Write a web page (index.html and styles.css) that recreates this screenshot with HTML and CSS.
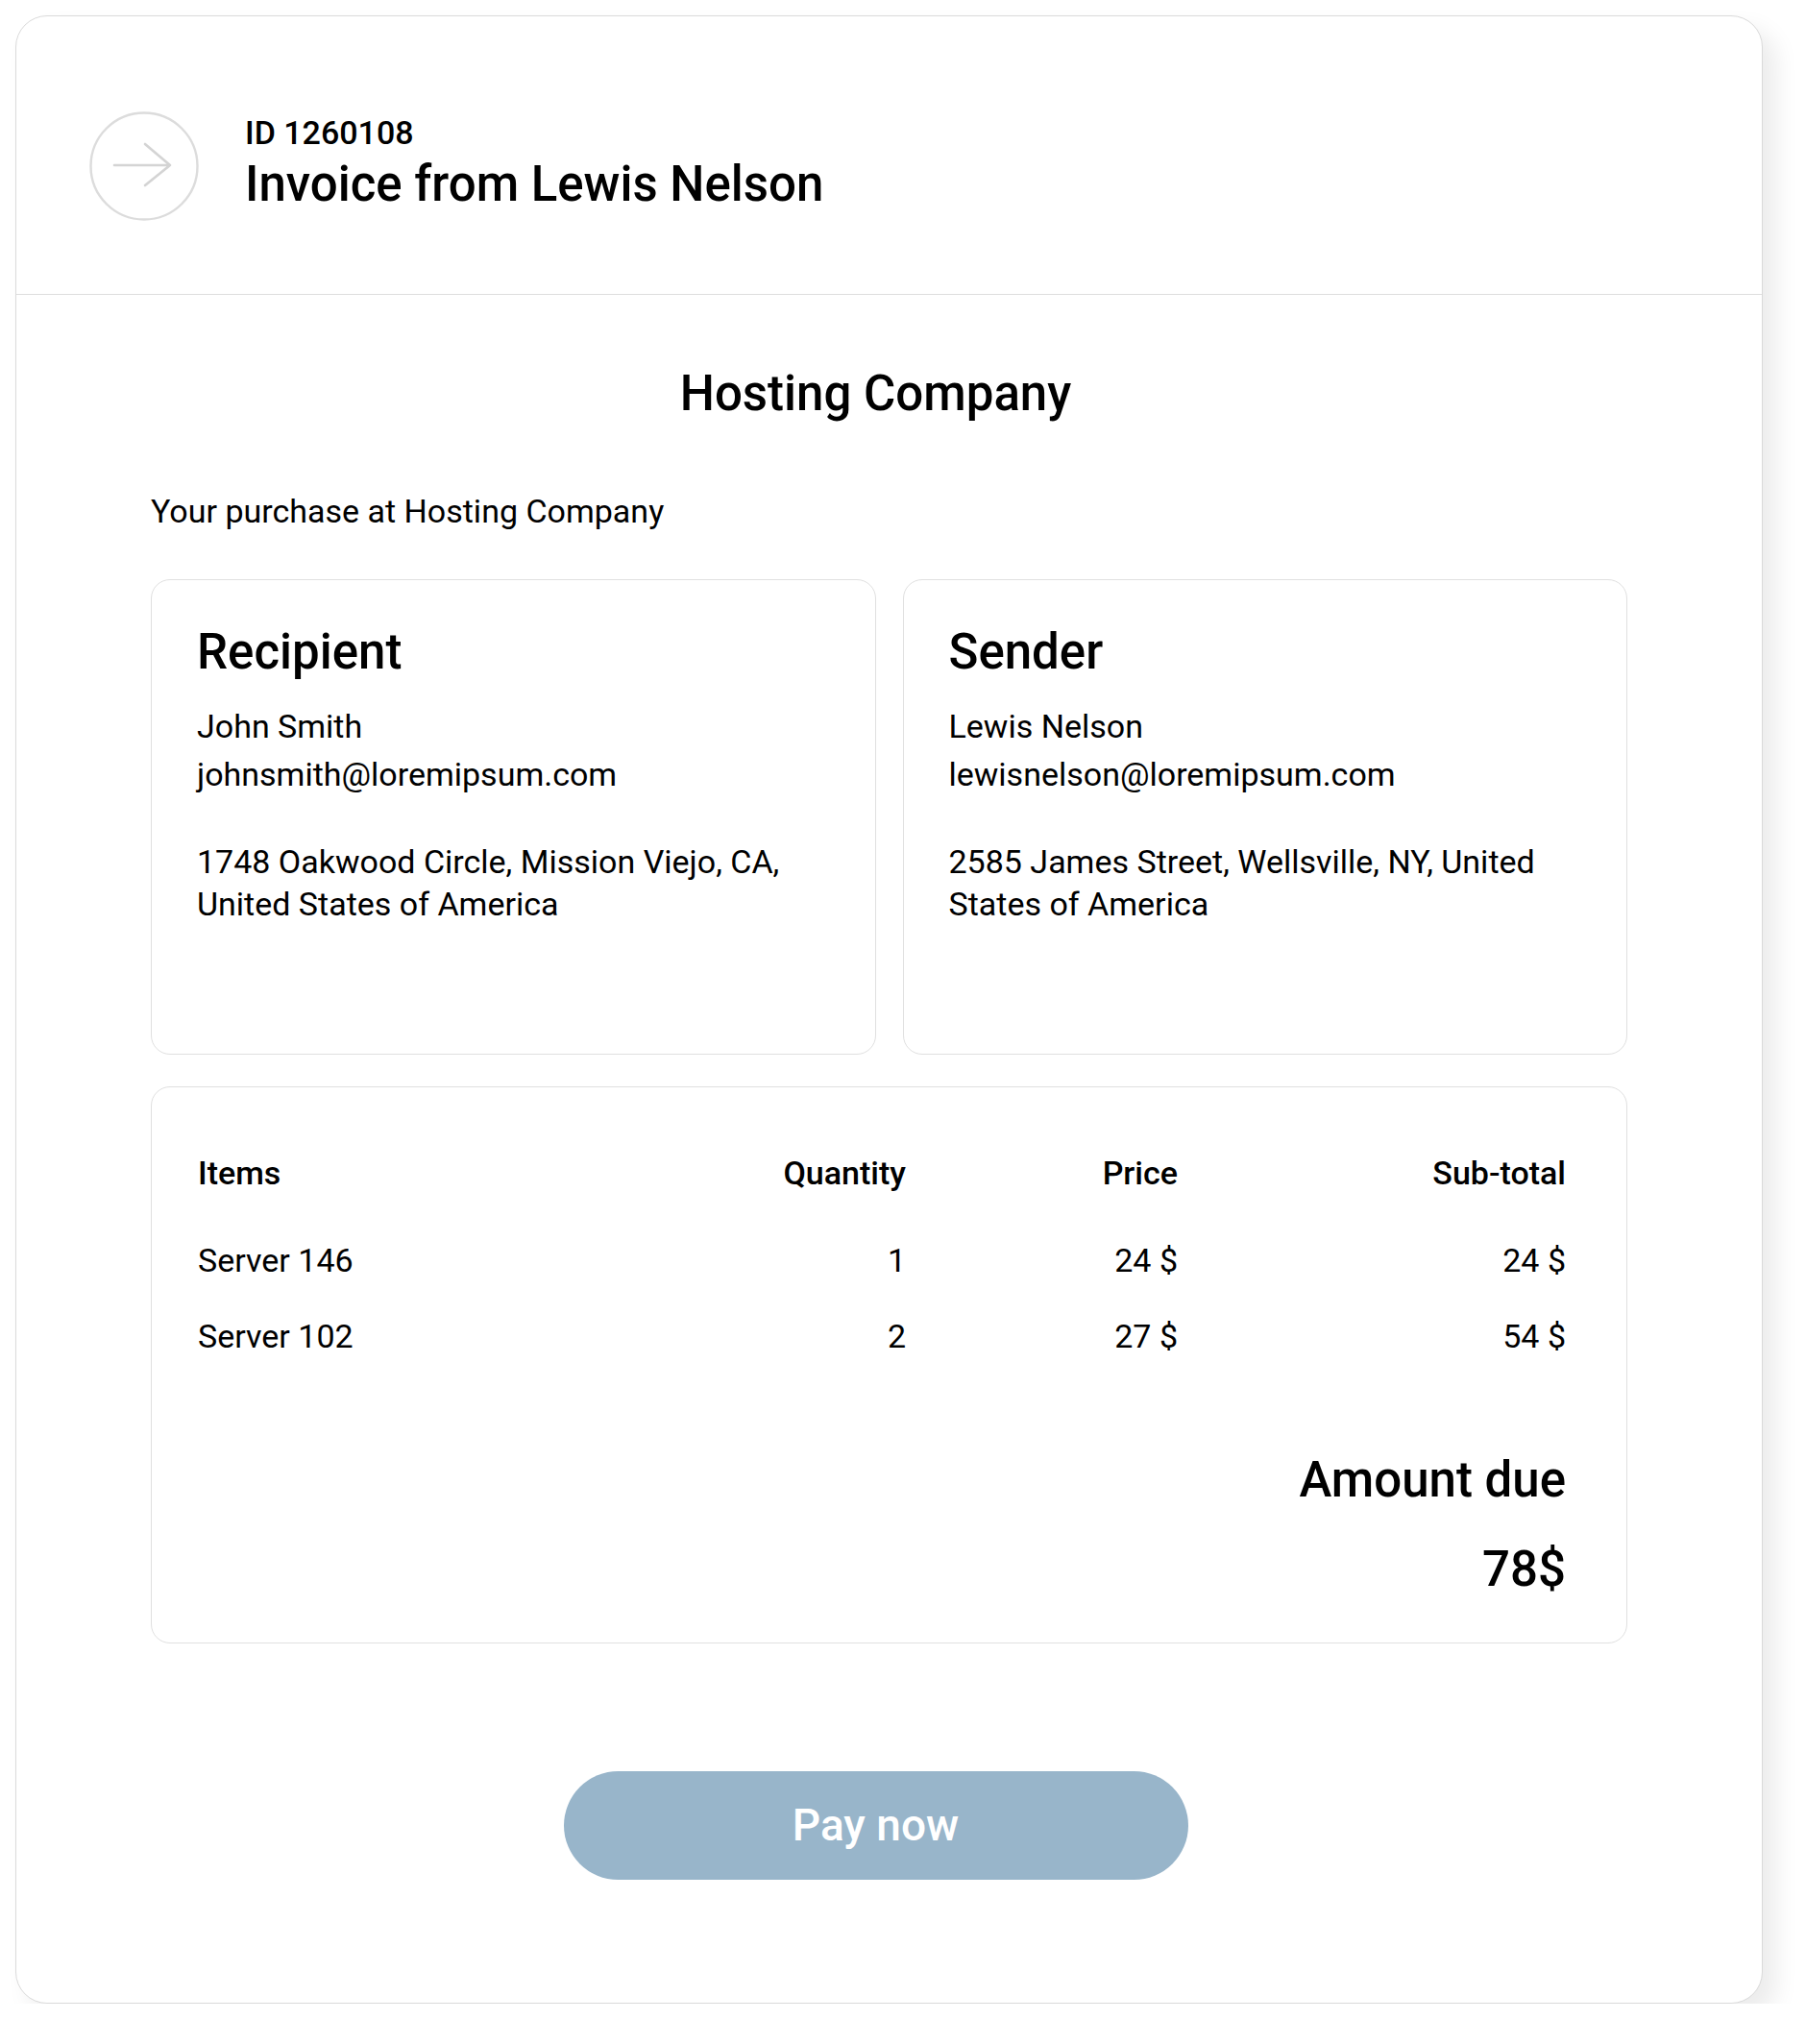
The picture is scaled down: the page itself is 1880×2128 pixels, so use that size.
FILE: index.html
```html
<!DOCTYPE html>
<html lang="en">
<head>
<meta charset="utf-8">
<title>Invoice from Lewis Nelson</title>
<link rel="stylesheet" href="styles.css">
</head>
<body>
<main class="invoice">
  <header class="invoice-header">
    <div class="back-icon">
      <svg width="114" height="114" viewBox="0 0 114 114" aria-hidden="true">
        <circle cx="57" cy="57" r="55.5" fill="none" stroke="#dcdcdc" stroke-width="2.4"/>
        <path d="M26 56 H84 M58 34 L84 56 L58 77" fill="none" stroke="#d4d4d4" stroke-width="2.6" stroke-linecap="round" stroke-linejoin="round"/>
      </svg>
    </div>
    <div class="header-text">
      <div class="invoice-id">ID 1260108</div>
      <h1 class="invoice-title">Invoice from Lewis Nelson</h1>
    </div>
  </header>

  <section class="invoice-body">
    <h2 class="company">Hosting Company</h2>
    <p class="purchase">Your purchase at Hosting Company</p>

    <div class="parties">
      <div class="party">
        <h3 class="party-title">Recipient</h3>
        <div class="party-line">John Smith</div>
        <div class="party-line">johnsmith@loremipsum.com</div>
        <div class="party-address">1748 Oakwood Circle, Mission Viejo, CA,<br>United States of America</div>
      </div>
      <div class="party">
        <h3 class="party-title">Sender</h3>
        <div class="party-line">Lewis Nelson</div>
        <div class="party-line">lewisnelson@loremipsum.com</div>
        <div class="party-address">2585 James Street, Wellsville, NY, United<br>States of America</div>
      </div>
    </div>

    <div class="items">
      <div class="row row-head">
        <div class="cell">Items</div>
        <div class="cell num">Quantity</div>
        <div class="cell num">Price</div>
        <div class="cell num">Sub-total</div>
      </div>
      <div class="row">
        <div class="cell">Server 146</div>
        <div class="cell num">1</div>
        <div class="cell num">24 $</div>
        <div class="cell num">24 $</div>
      </div>
      <div class="row">
        <div class="cell">Server 102</div>
        <div class="cell num">2</div>
        <div class="cell num">27 $</div>
        <div class="cell num">54 $</div>
      </div>
      <div class="total">
        <div class="total-label">Amount due</div>
        <div class="total-value">78$</div>
      </div>
    </div>

    <div class="actions">
      <button class="pay-btn" type="button">Pay now</button>
    </div>
  </section>
</main>
</body>
</html>
```

FILE: styles.css
```css
* {
  box-sizing: border-box;
}

html, body {
  margin: 0;
  padding: 0;
  background: #ffffff;
}

body {
  font-family: Roboto, "Liberation Sans", Arial, sans-serif;
  color: #000;
  padding: 16px 0 0 16px;
}

.invoice {
  width: 1819px;
  border: 1px solid #dadada;
  border-radius: 33px;
  background: #fff;
  box-shadow: 14px 14px 24px rgba(0, 0, 0, 0.08);
}

/* Header */
.invoice-header {
  display: flex;
  align-items: center;
  gap: 48px;
  padding: 99px 0 76px 76px;
  border-bottom: 1px solid #dedede;
}

.back-icon {
  width: 114px;
  height: 114px;
  flex: none;
}

.back-icon svg {
  display: block;
}

.header-text {
  padding-bottom: 8px;
}

.invoice-id {
  font-size: 34px;
  font-weight: 500;
  line-height: 40px;
  margin-bottom: 5px;
}

.invoice-title {
  margin: 0;
  font-size: 51px;
  font-weight: 500;
  line-height: 58px;
}

/* Body */
.invoice-body {
  padding: 74px 140px 128px 140px;
}

.company {
  margin: 0;
  padding-right: 28px;
  text-align: center;
  font-size: 51px;
  font-weight: 500;
  line-height: 58px;
}

.purchase {
  margin: 73px 0 0;
  font-size: 34px;
  line-height: 40px;
}

.parties {
  display: grid;
  grid-template-columns: 1fr 1fr;
  gap: 28px;
  margin-top: 51px;
}

.party {
  min-height: 495px;
  border: 1px solid #e0e0e0;
  border-radius: 20px;
  padding: 46px 40px 40px 47px;
}

.party-title {
  margin: 0 0 23px;
  font-size: 51px;
  font-weight: 500;
  line-height: 58px;
}

.party-line {
  font-size: 34px;
  line-height: 50px;
}

.party-address {
  margin-top: 44px;
  font-size: 34px;
  line-height: 44px;
}

/* Items */
.items {
  margin-top: 33px;
  border: 1px solid #e0e0e0;
  border-radius: 20px;
  padding: 69px 63px 47px 48px;
}

.row {
  display: grid;
  grid-template-columns: 1fr 230px 283px 404px;
  font-size: 34px;
  line-height: 40px;
  margin-bottom: 39px;
}

.row-head {
  font-weight: 500;
  margin-bottom: 51px;
}

.cell.num {
  text-align: right;
}

.total {
  text-align: right;
  margin-top: 101px;
}

.total-label {
  font-size: 51px;
  font-weight: 500;
  line-height: 58px;
}

.total-value {
  margin-top: 35px;
  font-size: 51px;
  font-weight: 500;
  line-height: 58px;
}

/* Button */
.actions {
  display: flex;
  justify-content: center;
  padding-right: 28px;
  margin-top: 133px;
}

.pay-btn {
  width: 650px;
  height: 113px;
  border: none;
  border-radius: 57px;
  background: #98b5ca;
  color: #fff;
  font-family: Roboto, "Liberation Sans", Arial, sans-serif;
  font-size: 46px;
  font-weight: 500;
  line-height: 113px;
  padding: 0;
}
```
